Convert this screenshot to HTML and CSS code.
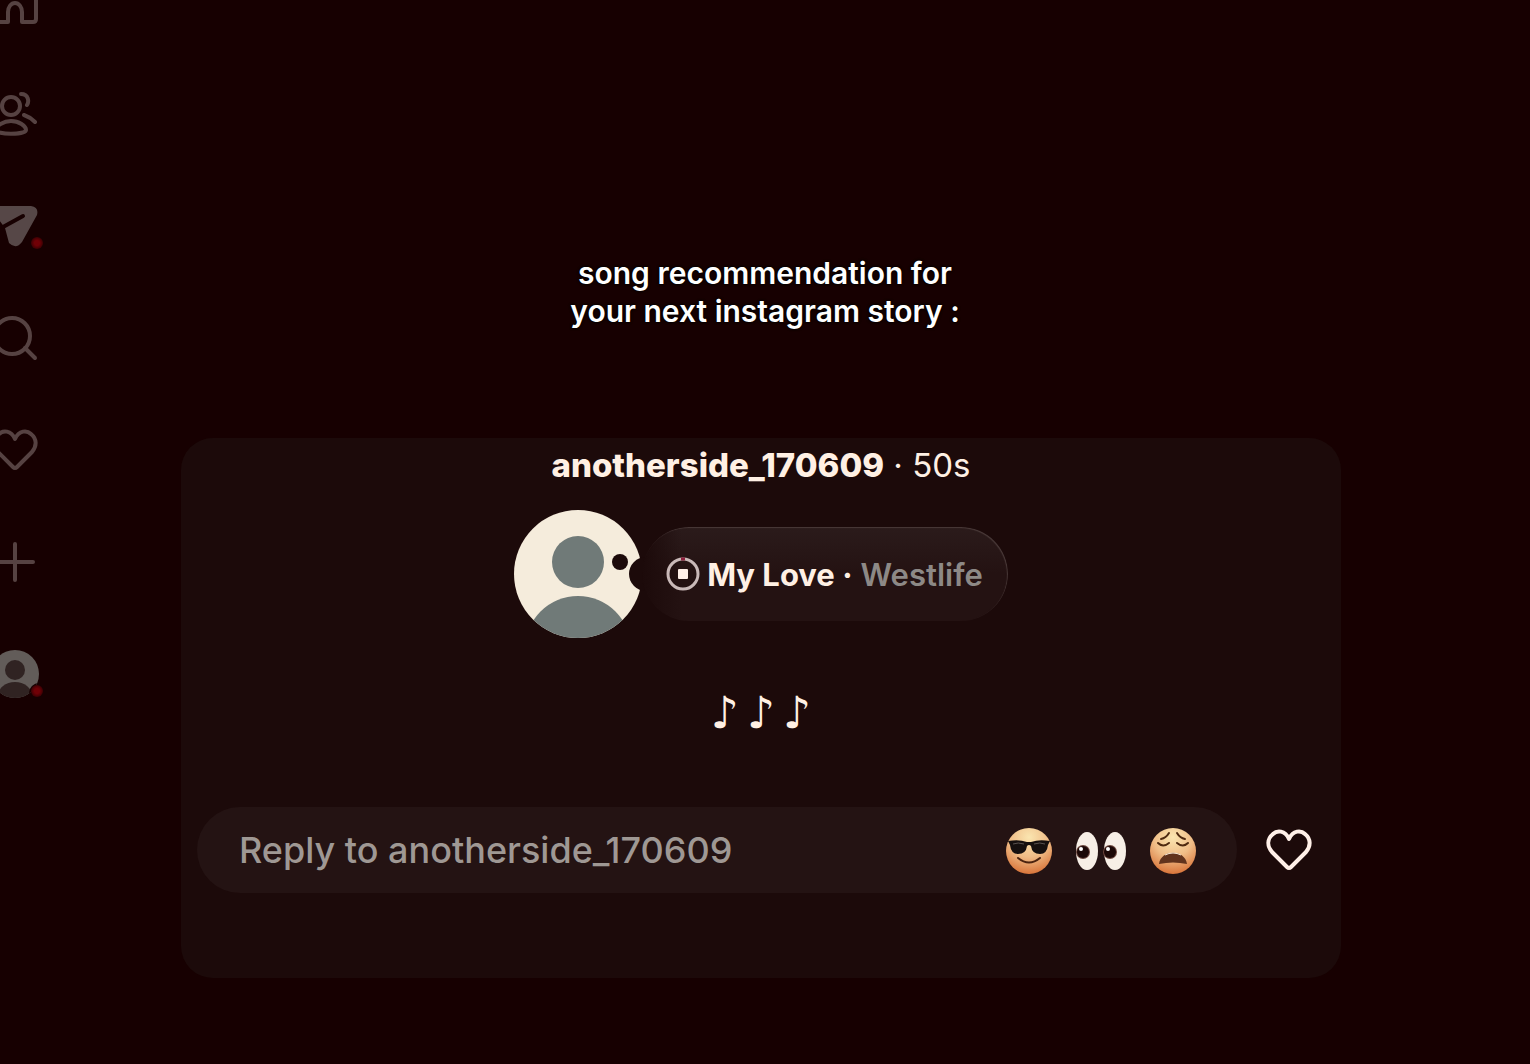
FILE: index.html
```html
<!DOCTYPE html>
<html lang="en">

<head>
    <meta charset="utf-8" />
    <meta name="viewport" content="width=device-width, initial-scale=1.0">
    <title>Note</title>
    <link rel="stylesheet" href="styles.css">
</head>

<body>
    <nav class="sidebar">
        <a href="#" aria-label="Home">
            <svg class="line" viewBox="0 0 48 48"><path d="M4 20V41Q4 44 7 44H17V34A7 9 0 0 1 31 34V44H42Q45 44 45 41V18" /></svg>
        </a>
        <a href="#" aria-label="Friends">
            <svg class="line" viewBox="0 0 48 48"><circle cx="20" cy="16" r="9" /><path d="M30 4C38 4 38 12 36 15M33 25Q39 27 44 32M20 31C28 31 35 36 35 40C35 45 5 45 5 40C5 36 12 31 20 31Z" /></svg>
        </a>
        <a href="#" aria-label="Messages">
            <svg viewBox="0 0 48 48"><path class="plane" d="M4 4H40Q48 5 46 13L31 40Q25 48 18 41L14 26L2 10Q0 5 4 4Z" /><path class="fold" d="M12 25L32 14" /></svg>
            <span class="dot"></span>
        </a>
        <a href="#" aria-label="Search">
            <svg class="line" viewBox="0 0 48 48"><circle cx="21" cy="22" r="18" /><path d="M34 34L44 44" /></svg>
        </a>
        <a href="#" aria-label="Notifications">
            <svg class="line" viewBox="0 0 48 48"><path d="M24 13C28 4 36 4 40 8C46 13 46 20 41 26L26 41Q24 43 22 41L7 26C2 20 2 13 8 8C12 4 20 4 24 13Z" /></svg>
        </a>
        <a href="#" aria-label="Create">
            <svg class="line" viewBox="0 0 48 48"><path d="M24 6V42M6 24H42" /></svg>
        </a>
        <a href="#" aria-label="Profile">
            <svg viewBox="0 0 48 48">
                <clipPath id="clipSmall"><circle cx="24" cy="24" r="24" /></clipPath>
                <g clip-path="url(#clipSmall)">
                    <rect class="smallBack" width="48" height="48" />
                    <circle class="smallBody" cx="24" cy="20" r="10" />
                    <ellipse class="smallBody" cx="24" cy="46" rx="17" ry="14" />
                    <circle class="smallCut" cx="48" cy="43" r="10" />
                </g>
            </svg>
            <span class="dot"></span>
        </a>
    </nav>

    <main>
        <h1 class="caption">song recommendation for<br>your next instagram story :</h1>

        <section class="card">
            <p class="user"><b>anotherside_170609</b> · 50s</p>

            <div class="note">
                <svg class="avatar" viewBox="0 0 128 128">
                    <clipPath id="clipBig"><circle cx="64" cy="64" r="64" /></clipPath>
                    <g clip-path="url(#clipBig)">
                        <rect fill="#f5ecdc" width="128" height="128" />
                        <circle fill="#707a78" cx="64" cy="52" r="26" />
                        <circle fill="#707a78" cx="64" cy="139" r="53" />
                    </g>
                    <!-- thought bubble tail -->
                    <circle fill="#1c0a0a" cx="106" cy="52" r="8" />
                    <circle fill="#1c0a0a" cx="132" cy="64" r="17" />
                </svg>
                <div class="bubble">
                    <svg class="stop" viewBox="0 0 32 32"><circle cx="16" cy="16" r="15" fill="none" stroke="#c9b9b8" stroke-width="3" /><path d="M14 1H18" stroke="#8c1f3c" stroke-width="3" /><rect x="11" y="11" width="10" height="10" rx="1" fill="#fff0e8" /></svg>
                    <b>My Love ·</b>
                    <span class="artist">Westlife</span>
                </div>
            </div>

            <p class="music"><span>♪</span><span>♪</span><span>♪</span></p>

            <form class="replyRow">
                <div class="reply">
                    <input type="text" aria-label="Reply" placeholder="Reply to anotherside_170609">
                    <button type="button" aria-label="Cool">
                        <svg viewBox="0 0 48 48">
                            <defs>
                                <radialGradient id="skin" cx=".5" cy=".2" r=".85">
                                    <stop offset="0" stop-color="#fae5b0" />
                                    <stop offset=".5" stop-color="#f0bd87" />
                                    <stop offset="1" stop-color="#d56b30" />
                                </radialGradient>
                            </defs>
                            <circle cx="24" cy="25" r="23" fill="url(#skin)" />
                            <path fill="#16100f" d="M3 15Q14 13 22 16H26Q34 13 45 15L43 19Q42 28 35 28Q27 28 26 20Q24 18 22 20Q21 28 13 28Q6 28 5 19Z" />
                            <path d="M8 18Q13 16 19 18M29 18Q35 16 40 18" fill="none" stroke="#5a5350" stroke-width="1" />
                            <path d="M13 32Q24 41 35 32" fill="none" stroke="#4b230f" stroke-width="2" stroke-linecap="round" />
                        </svg>
                    </button>
                    <button type="button" aria-label="Eyes">
                        <svg viewBox="0 0 48 48">
                            <g fill="#f7efe6"><ellipse cx="10" cy="25" rx="11" ry="19" /><ellipse cx="38" cy="25" rx="11" ry="19" /></g>
                            <g fill="#6b453c"><circle cx="6" cy="26" r="7" /><circle cx="33" cy="26" r="7" /></g>
                            <g fill="#1c0806"><circle cx="6" cy="26" r="6" /><circle cx="33" cy="26" r="6" /></g>
                            <g fill="#fff"><circle cx="4" cy="23" r="2" /><circle cx="31" cy="23" r="2" /></g>
                        </svg>
                    </button>
                    <button type="button" aria-label="Weary">
                        <svg viewBox="0 0 48 48">
                            <circle cx="24" cy="25" r="23" fill="url(#skin)" />
                            <path d="M12 13Q17 12 20 7M28 7Q31 12 36 13M9 17Q14 22 20 17M28 17Q34 22 39 17" fill="none" stroke="#4f2a10" stroke-width="2" stroke-linecap="round" />
                            <path fill="#61331d" d="M10 38C12 23 36 23 38 38Q24 35 10 38Z" />
                            <path d="M16 29Q24 25 32 29" fill="none" stroke="#f8e8d4" stroke-width="1" />
                        </svg>
                    </button>
                </div>
                <button type="button" class="like" aria-label="Like">
                    <svg viewBox="0 0 48 48"><path d="M24 13C28 4 36 4 40 8C46 13 46 20 41 26L26 41Q24 43 22 41L7 26C2 20 2 13 8 8C12 4 20 4 24 13Z" /></svg>
                </button>
            </form>
        </section>
    </main>
</body>

</html>
```
FILE: styles.css
```css
* {
    box-sizing: border-box;
}

body {
    margin: 0;
    display: flex;
    align-items: flex-start;
    min-height: 100vh;
    overflow: hidden;
    background-color: #170001;
    color: #fff0e4;
    font-family: Inter, "Liberation Sans", sans-serif;
}

h1,
p {
    margin: 0;
}

svg {
    display: block;
    width: 100%;
    overflow: visible;
}

button {
    padding: 0;
    border-style: none;
    background: none;
}

/* side menu, partly off the left edge */
.sidebar {
    flex: none;
    display: flex;
    flex-direction: column;
    gap: 64px;
    width: 48px;
    margin-left: -9px;
    margin-top: -22px;
}

.sidebar a {
    position: relative;
    height: 48px;
}

.line {
    fill: none;
    stroke: #564242;
    stroke-width: 4;
    stroke-linecap: round;
    stroke-linejoin: round;
}

.plane {
    fill: #564747;
}

.fold {
    stroke: #170001;
    stroke-width: 4;
    stroke-linecap: round;
}

.smallBack {
    fill: #625c59;
}

.smallBody {
    fill: #302322;
}

.smallCut {
    fill: #170001;
}

.dot {
    position: absolute;
    right: -4px;
    bottom: 1px;
    width: 12px;
    height: 12px;
    border-radius: 50%;
    background: radial-gradient(#700006 30%, #170001);
}

main {
    flex: 1;
    padding: 254px 181px 0 142px;
}

.caption {
    color: #fff;
    font-size: 30px;
    line-height: 38px;
    font-weight: 600;
    text-align: center;
    text-shadow: 0 0 3px #000, 0 0 3px #000;
}

.card {
    margin-top: 108px;
    margin-right: 8px;
    padding: 7px 16px 85px;
    border-radius: 32px;
    background-color: #1c0a0a;
}

.user {
    font-size: 33px;
    line-height: 40px;
    text-align: center;
}

.user b {
    font-weight: 800;
}

.note {
    display: flex;
    justify-content: center;
    align-items: center;
    margin-top: 25px;
}

.avatar {
    flex: none;
    width: 128px;
}

.bubble {
    display: flex;
    align-items: center;
    gap: 8px;
    height: 94px;
    padding: 0 25px;
    border-radius: 47px;
    background: linear-gradient(to right, #1c0a0a, transparent 40px), linear-gradient(#2b1b1b, #241212 50%);
    box-shadow: inset -1px 1px 1px #4a3a39;
    font-size: 31px;
}

.stop {
    flex: none;
    width: 32px;
}

.artist {
    color: #8d8986;
    font-weight: 600;
}

.music {
    display: flex;
    justify-content: center;
    gap: 8px;
    margin-top: 51px;
    font-family: "DejaVu Sans", sans-serif;
    font-size: 44px;
    font-weight: bold;
    line-height: 48px;
}

.replyRow {
    display: flex;
    align-items: center;
    gap: 28px;
    margin-top: 70px;
    padding-right: 12px;
}

.reply {
    flex: 1;
    display: flex;
    align-items: center;
    gap: 24px;
    height: 86px;
    padding: 0 40px 0 42px;
    border-radius: 43px;
    background-color: #241313;
}

.reply input {
    flex: 1;
    min-width: 0;
    padding: 0;
    border-style: none;
    outline: none;
    background: none;
    color: #fff0e4;
    font: inherit;
    font-size: 36px;
    font-weight: 500;
}

.reply input::placeholder {
    color: #9f9894;
    opacity: 1;
}

.reply button,
.like {
    flex: none;
    width: 48px;
}

.like svg {
    fill: none;
    stroke: #fff0e8;
    stroke-width: 4;
    stroke-linejoin: round;
}
```
